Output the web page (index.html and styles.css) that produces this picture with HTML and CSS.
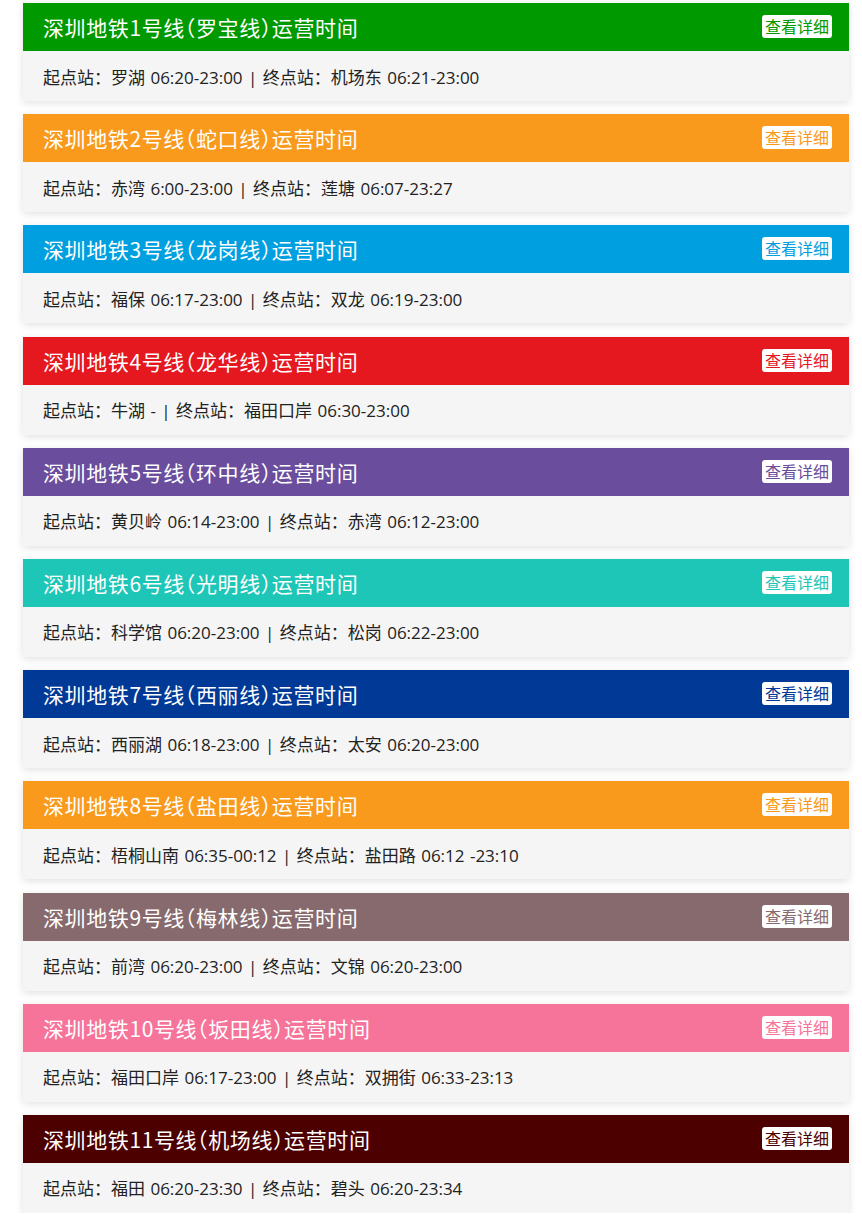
FILE: index.html
```html
<!DOCTYPE html>
<html lang="zh-CN">
<head>
<meta charset="utf-8">
<title>深圳地铁运营时间</title>
<link rel="stylesheet" href="styles.css">
</head>
<body>
<div class="list">
  <div class="card l1"><div class="head"><span class="title">深圳地铁1号线（罗宝线）运营时间</span><a class="btn">查看详细</a></div><div class="body">起点站：罗湖 06:20-23:00 | 终点站：机场东 06:21-23:00</div></div>
  <div class="card l2"><div class="head"><span class="title">深圳地铁2号线（蛇口线）运营时间</span><a class="btn">查看详细</a></div><div class="body">起点站：赤湾 6:00-23:00 | 终点站：莲塘 06:07-23:27</div></div>
  <div class="card l3"><div class="head"><span class="title">深圳地铁3号线（龙岗线）运营时间</span><a class="btn">查看详细</a></div><div class="body">起点站：福保 06:17-23:00 | 终点站：双龙 06:19-23:00</div></div>
  <div class="card l4"><div class="head"><span class="title">深圳地铁4号线（龙华线）运营时间</span><a class="btn">查看详细</a></div><div class="body">起点站：牛湖 - | 终点站：福田口岸 06:30-23:00</div></div>
  <div class="card l5"><div class="head"><span class="title">深圳地铁5号线（环中线）运营时间</span><a class="btn">查看详细</a></div><div class="body">起点站：黄贝岭 06:14-23:00 | 终点站：赤湾 06:12-23:00</div></div>
  <div class="card l6"><div class="head"><span class="title">深圳地铁6号线（光明线）运营时间</span><a class="btn">查看详细</a></div><div class="body">起点站：科学馆 06:20-23:00 | 终点站：松岗 06:22-23:00</div></div>
  <div class="card l7"><div class="head"><span class="title">深圳地铁7号线（西丽线）运营时间</span><a class="btn">查看详细</a></div><div class="body">起点站：西丽湖 06:18-23:00 | 终点站：太安 06:20-23:00</div></div>
  <div class="card l8"><div class="head"><span class="title">深圳地铁8号线（盐田线）运营时间</span><a class="btn">查看详细</a></div><div class="body">起点站：梧桐山南 06:35-00:12 | 终点站：盐田路 06:12 -23:10</div></div>
  <div class="card l9"><div class="head"><span class="title">深圳地铁9号线（梅林线）运营时间</span><a class="btn">查看详细</a></div><div class="body">起点站：前湾 06:20-23:00 | 终点站：文锦 06:20-23:00</div></div>
  <div class="card l10"><div class="head"><span class="title">深圳地铁10号线（坂田线）运营时间</span><a class="btn">查看详细</a></div><div class="body">起点站：福田口岸 06:17-23:00 | 终点站：双拥街 06:33-23:13</div></div>
  <div class="card l11"><div class="head"><span class="title">深圳地铁11号线（机场线）运营时间</span><a class="btn">查看详细</a></div><div class="body">起点站：福田 06:20-23:30 | 终点站：碧头 06:20-23:34</div></div>
</div>
</body>
</html>
```

FILE: styles.css
```css
html, body {
  margin: 0;
  padding: 0;
  background: #ffffff;
}
body {
  font-family: "Noto Sans CJK SC", "Noto Sans", sans-serif;
}
.list {
  display: flex;
  flex-direction: column;
  gap: 13.2px;
  padding: 3px 13px 0 23px;
}
.card {
  width: 826px;
  background: #f5f5f5;
  box-shadow: 0 2px 8px rgba(0, 0, 0, 0.12);
}
.head {
  height: 48px;
  display: flex;
  align-items: center;
  justify-content: space-between;
  padding: 0 17px 0 20px;
  color: #ffffff;
}
.title {
  font-size: 21px;
  font-feature-settings: "halt";
  letter-spacing: 0.6px;
}
.btn {
  background: #ffffff;
  border-radius: 3px;
  font-size: 16px;
  line-height: 23px;
  height: 23px;
  padding: 0 3px;
  margin-top: -1px;
}
.body {
  height: 50px;
  display: flex;
  align-items: center;
  padding-left: 20px;
  font-family: "Open Sans", "Noto Sans CJK SC", sans-serif;
  font-size: 17px;
  word-spacing: 1px;
  color: #222222;
}
.l1 .head { background: #009900; } .l1 .btn { color: #009900; }
.l2 .head { background: #f99a1c; } .l2 .btn { color: #f99a1c; }
.l3 .head { background: #00a0e0; } .l3 .btn { color: #00a0e0; }
.l4 .head { background: #e5171f; } .l4 .btn { color: #e5171f; }
.l5 .head { background: #6a4d9c; } .l5 .btn { color: #6a4d9c; }
.l6 .head { background: #1ec6b7; } .l6 .btn { color: #1ec6b7; }
.l7 .head { background: #003a96; } .l7 .btn { color: #003a96; }
.l8 .head { background: #f99a1c; } .l8 .btn { color: #f99a1c; }
.l9 .head { background: #876a6d; } .l9 .btn { color: #876a6d; }
.l10 .head { background: #f6739a; } .l10 .btn { color: #f6739a; }
.l11 .head { background: #4d0000; } .l11 .btn { color: #4d0000; }
```
